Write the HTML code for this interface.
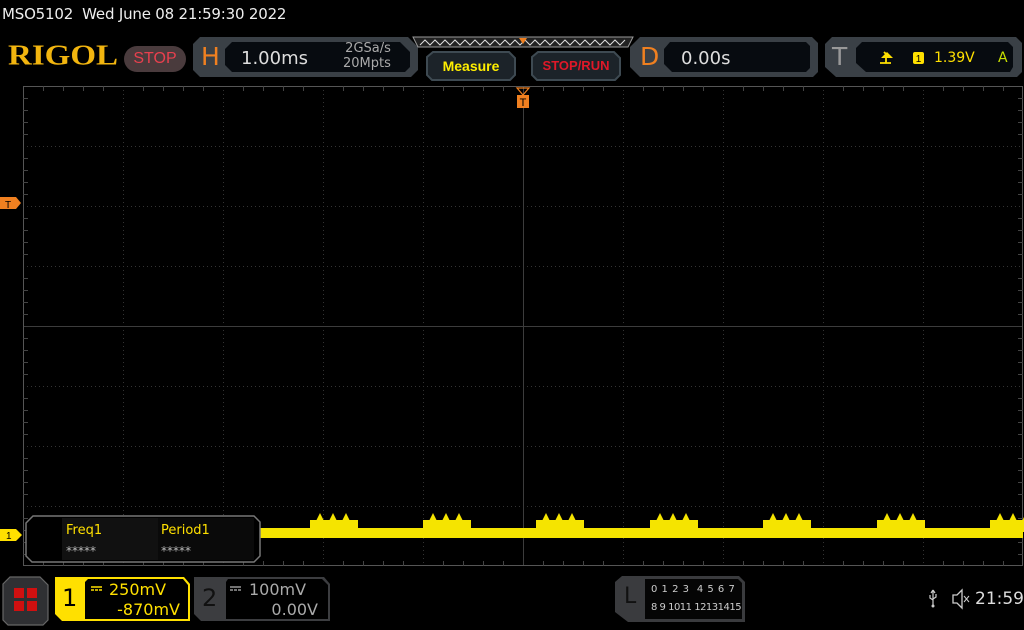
<!DOCTYPE html>
<html><head><meta charset="utf-8"><style>
*{margin:0;padding:0;box-sizing:border-box}
body{width:1024px;height:630px;background:#000;overflow:hidden;position:relative;font-family:"DejaVu Sans","Liberation Sans",sans-serif;color:#ddd}
.a{position:absolute;white-space:nowrap}
</style></head><body>
<div class="a" style="left:2px;top:5px;font-size:15px;color:#eee;letter-spacing:-0.2px">MSO5102&nbsp; Wed June 08 21:59:30 2022</div>
<div class="a" style="left:8px;top:38px;font-family:'Liberation Serif',serif;font-weight:bold;font-size:33px;color:#f2b50f;transform:scaleY(0.85);transform-origin:0 50%">RIGOL</div>
<div class="a" style="left:124px;top:46px;width:62px;height:26px;border-radius:13px;background:#4a3b3d;color:#e8404e;font-family:'Liberation Sans',sans-serif;font-size:16px;text-align:center;line-height:26px">STOP</div>

<svg class="a" style="left:0;top:0" width="1024" height="630">
 <path d="M200 37H408L418 47V70L411 77H200L193 70V44Z" fill="#3a4046"/>
 <path d="M232 42H400L410 52V67L405 72H232L225 65V49Z" fill="#070b10"/>
 <path d="M413 37H633L628 47H418Z" fill="#222" stroke="#999" stroke-width="1"/>
 <polyline points="420,45 425,40 430,45 435,40 440,45 445,40 450,45 455,40 460,45 465,40 470,45 475,40 480,45 485,40 490,45 495,40 500,45 505,40 510,45 515,40 520,45 525,40 530,45 535,40 540,45 545,40 550,45 555,40 560,45 565,40 570,45 575,40 580,45 585,40 590,45 595,40 600,45 605,40 610,45 615,40 620,45 625,40" fill="none" stroke="#ddd" stroke-width="1"/>
 <path d="M519 38H527L523 44Z" fill="#f08020"/>
 <path d="M433 52H509L515 58V75L510 80H432L427 75V57Z" fill="#1c2329" stroke="#3e4a52" stroke-width="2"/>
 <path d="M538 52H614L620 58V75L615 80H537L532 75V57Z" fill="#1c2329" stroke="#3e4a52" stroke-width="2"/>
 <path d="M640 37H812L818 43V72L813 77H640L630 67V47Z" fill="#3a4046"/>
 <path d="M670 42H806L810 46V68L806 72H672L664 64V49Z" fill="#070b10"/>
 <path d="M832 37H1016L1022 43V72L1017 77H836L825 67V44Z" fill="#3a4046"/>
 <path d="M862 42H1008L1013 47V67L1010 72H866L856 63V48Z" fill="#070b10"/>
 <path d="M884 52L889 57H886V63H891M880 63H886" fill="none" stroke="#ffe000" stroke-width="1.8"/>
 <path d="M881 58H893L887 52Z" fill="#ffe000"/>
 <rect x="913" y="52" width="11" height="12" rx="2" fill="#ffe000"/>
 <text x="918.5" y="62" font-size="10" fill="#000" text-anchor="middle" font-family="Liberation Sans">1</text>

 <g stroke="#333" stroke-width="1" stroke-dasharray="1 3">
  <line x1="123.5" y1="86" x2="123.5" y2="566"/><line x1="223.5" y1="86" x2="223.5" y2="566"/><line x1="323.5" y1="86" x2="323.5" y2="566"/><line x1="423.5" y1="86" x2="423.5" y2="566"/><line x1="623.5" y1="86" x2="623.5" y2="566"/><line x1="723.5" y1="86" x2="723.5" y2="566"/><line x1="823.5" y1="86" x2="823.5" y2="566"/><line x1="923.5" y1="86" x2="923.5" y2="566"/>
  <line x1="23" y1="146.5" x2="1023" y2="146.5"/><line x1="23" y1="206.5" x2="1023" y2="206.5"/><line x1="23" y1="266.5" x2="1023" y2="266.5"/><line x1="23" y1="386.5" x2="1023" y2="386.5"/><line x1="23" y1="446.5" x2="1023" y2="446.5"/><line x1="23" y1="506.5" x2="1023" y2="506.5"/>
 </g>
 <g stroke="#3c3c3c" stroke-width="1">
  <line x1="523.5" y1="86" x2="523.5" y2="566"/><line x1="23" y1="326.5" x2="1023" y2="326.5"/>
 </g>
 <rect x="23.5" y="86.5" width="999" height="479" fill="none" stroke="#555"/>
 <g stroke="#444" stroke-width="1">
  <path d="M43.5 86v5M63.5 86v5M83.5 86v5M103.5 86v5M143.5 86v5M163.5 86v5M183.5 86v5M203.5 86v5M243.5 86v5M263.5 86v5M283.5 86v5M303.5 86v5M343.5 86v5M363.5 86v5M383.5 86v5M403.5 86v5M443.5 86v5M463.5 86v5M483.5 86v5M503.5 86v5M543.5 86v5M563.5 86v5M583.5 86v5M603.5 86v5M643.5 86v5M663.5 86v5M683.5 86v5M703.5 86v5M743.5 86v5M763.5 86v5M783.5 86v5M803.5 86v5M843.5 86v5M863.5 86v5M883.5 86v5M903.5 86v5M943.5 86v5M963.5 86v5M983.5 86v5M1003.5 86v5"/>
  <path d="M43.5 566v-5M63.5 566v-5M83.5 566v-5M103.5 566v-5M143.5 566v-5M163.5 566v-5M183.5 566v-5M203.5 566v-5M243.5 566v-5M263.5 566v-5M283.5 566v-5M303.5 566v-5M343.5 566v-5M363.5 566v-5M383.5 566v-5M403.5 566v-5M443.5 566v-5M463.5 566v-5M483.5 566v-5M503.5 566v-5M543.5 566v-5M563.5 566v-5M583.5 566v-5M603.5 566v-5M643.5 566v-5M663.5 566v-5M683.5 566v-5M703.5 566v-5M743.5 566v-5M763.5 566v-5M783.5 566v-5M803.5 566v-5M843.5 566v-5M863.5 566v-5M883.5 566v-5M903.5 566v-5M943.5 566v-5M963.5 566v-5M983.5 566v-5M1003.5 566v-5"/>
  <path d="M23 98.5h5M23 110.5h5M23 122.5h5M23 134.5h5M23 158.5h5M23 170.5h5M23 182.5h5M23 194.5h5M23 218.5h5M23 230.5h5M23 242.5h5M23 254.5h5M23 278.5h5M23 290.5h5M23 302.5h5M23 314.5h5M23 338.5h5M23 350.5h5M23 362.5h5M23 374.5h5M23 398.5h5M23 410.5h5M23 422.5h5M23 434.5h5M23 458.5h5M23 470.5h5M23 482.5h5M23 494.5h5M23 518.5h5M23 530.5h5M23 542.5h5M23 554.5h5"/>
  <path d="M1023 98.5h-5M1023 110.5h-5M1023 122.5h-5M1023 134.5h-5M1023 158.5h-5M1023 170.5h-5M1023 182.5h-5M1023 194.5h-5M1023 218.5h-5M1023 230.5h-5M1023 242.5h-5M1023 254.5h-5M1023 278.5h-5M1023 290.5h-5M1023 302.5h-5M1023 314.5h-5M1023 338.5h-5M1023 350.5h-5M1023 362.5h-5M1023 374.5h-5M1023 398.5h-5M1023 410.5h-5M1023 422.5h-5M1023 434.5h-5M1023 458.5h-5M1023 470.5h-5M1023 482.5h-5M1023 494.5h-5M1023 518.5h-5M1023 530.5h-5M1023 542.5h-5M1023 554.5h-5"/>
 </g>
 <path d="M517 88H529L523 95Z" fill="none" stroke="#f08020" stroke-width="1.2"/>
 <rect x="517" y="95" width="12" height="13" fill="#f08020"/>
 <text x="523" y="106" font-size="11" fill="#000" text-anchor="middle" font-family="Liberation Sans">T</text>
 <path d="M0 197H16L21 203L16 209H0Z" fill="#f08020"/>
 <text x="5" y="208" font-size="10" fill="#000" font-family="Liberation Sans">T</text>
 <path d="M0 529H16L22 535L16 541H0Z" fill="#ffe000"/>
 <text x="6" y="539" font-size="10" fill="#000" font-family="Liberation Sans">1</text>

 <g fill="#f5e400">
  <rect x="260" y="528" width="763" height="10"/>
  <g id="p">
   <rect x="310" y="520" width="48" height="12"/>
   <path d="M316 521L320 513L324 521ZM329 521L333 513L337 521ZM342 521L346 513L350 521Z"/>
  </g>
  <use href="#p" x="113"/><use href="#p" x="226"/><use href="#p" x="340"/><use href="#p" x="453"/><use href="#p" x="567"/><use href="#p" x="680"/>
 </g>

 <path d="M33 516H254L260 522V556L254 562H32L26 556V523Z" fill="#000" stroke="#777" stroke-width="1.5"/>
 <rect x="62" y="518" width="96" height="42" fill="#111"/>
 <rect x="158" y="518" width="96" height="42" fill="#0a0a0a"/>

 <path d="M10 577H40L48 585V620L43 625H8L3 620V584Z" fill="#2f3033" stroke="#666" stroke-width="1.2"/>
 <g fill="#d01010"><rect x="14" y="588" width="10" height="10"/><rect x="27" y="588" width="10" height="10"/><rect x="14" y="601" width="10" height="10"/><rect x="27" y="601" width="10" height="10"/></g>
 <path d="M55 577H184L190 584V621H62L55 614Z" fill="#ffe000"/>
 <path d="M88 579H183L188 585V619H85V582Z" fill="#000"/>
 <path d="M194 577H324L330 584V621H201L194 614Z" fill="#3c3d40"/>
 <path d="M228 579H322L328 585V619H226V582Z" fill="#000"/>
 <g stroke-width="1.5"><path d="M91 587h11" stroke="#ffe000"/><path d="M91 590h3M95 590h3M99 590h3" stroke="#ffe000"/>
 <path d="M230 587h11" stroke="#999"/><path d="M230 590h3M234 590h3M238 590h3" stroke="#999"/></g>
 <path d="M622 576H739L745 582V622H628L615 612V582Z" fill="#3a3b3e"/>
 <path d="M645 579H738L742 583V619H645Z" fill="#050505"/>
 <path d="M933 590V605M933 590l-2 3M933 590l2 3M930 595v3l3 2M936 594v3l-3 2" stroke="#ccc" stroke-width="1.2" fill="none"/>
 <circle cx="933" cy="606" r="1.5" fill="#ccc"/>
 <path d="M953 595h4l5-5v18l-5-5h-4Z" fill="none" stroke="#ccc" stroke-width="1.3"/>
 <path d="M964 596l5 6M969 596l-5 6" stroke="#ccc" stroke-width="1"/>
</svg>

<div class="a" style="left:201px;top:42px;font-size:25px;color:#f08020">H</div>
<div class="a" style="left:241px;top:48px;font-size:18px;color:#ddd">1.00ms</div>
<div class="a" style="left:343px;top:41px;font-size:13px;color:#aaa;line-height:15px;text-align:right">2GSa/s<br>20Mpts</div>
<div class="a" style="left:427px;top:58px;width:88px;text-align:center;font-family:'Liberation Sans',sans-serif;font-weight:bold;font-size:14px;color:#ffee00">Measure</div>
<div class="a" style="left:532px;top:58px;width:88px;text-align:center;font-family:'Liberation Sans',sans-serif;font-weight:bold;font-size:13px;color:#e01828">STOP/RUN</div>
<div class="a" style="left:640px;top:42px;font-size:25px;color:#f08020">D</div>
<div class="a" style="left:681px;top:48px;font-size:18px;color:#ddd">0.00s</div>
<div class="a" style="left:832px;top:42px;font-size:25px;color:#999">T</div>
<div class="a" style="left:934px;top:50px;font-size:14px;color:#ffe000">1.39V</div>
<div class="a" style="left:998px;top:50px;font-size:14px;color:#c8e000">A</div>

<div class="a" style="left:66px;top:523px;font-size:13px;color:#ffe000">Freq1</div>
<div class="a" style="left:66px;top:544px;font-size:12px;color:#bbb">*****</div>
<div class="a" style="left:161px;top:523px;font-size:13px;color:#ffe000">Period1</div>
<div class="a" style="left:161px;top:544px;font-size:12px;color:#bbb">*****</div>

<div class="a" style="left:62px;top:584px;font-size:24px;color:#000">1</div>
<div class="a" style="left:109px;top:580px;font-size:16px;color:#ffe000">250mV</div>
<div class="a" style="left:100px;top:600px;width:80px;text-align:right;font-size:16px;color:#ffe000">-870mV</div>
<div class="a" style="left:202px;top:584px;font-size:24px;color:#111">2</div>
<div class="a" style="left:249px;top:580px;font-size:16px;color:#aaa">100mV</div>
<div class="a" style="left:238px;top:600px;width:80px;text-align:right;font-size:16px;color:#aaa">0.00V</div>

<div class="a" style="left:624px;top:584px;font-size:22px;color:#111">L</div>
<div class="a" style="left:651px;top:584px;font-size:10px;color:#ccc;letter-spacing:0.5px">0 1 2 3&nbsp; 4 5 6 7</div>
<div class="a" style="left:651px;top:602px;font-size:10px;color:#ccc;letter-spacing:-0.5px">8 9 1011 12131415</div>
<div class="a" style="left:975px;top:589px;font-size:17px;color:#ddd">21:59</div>
</body></html>
